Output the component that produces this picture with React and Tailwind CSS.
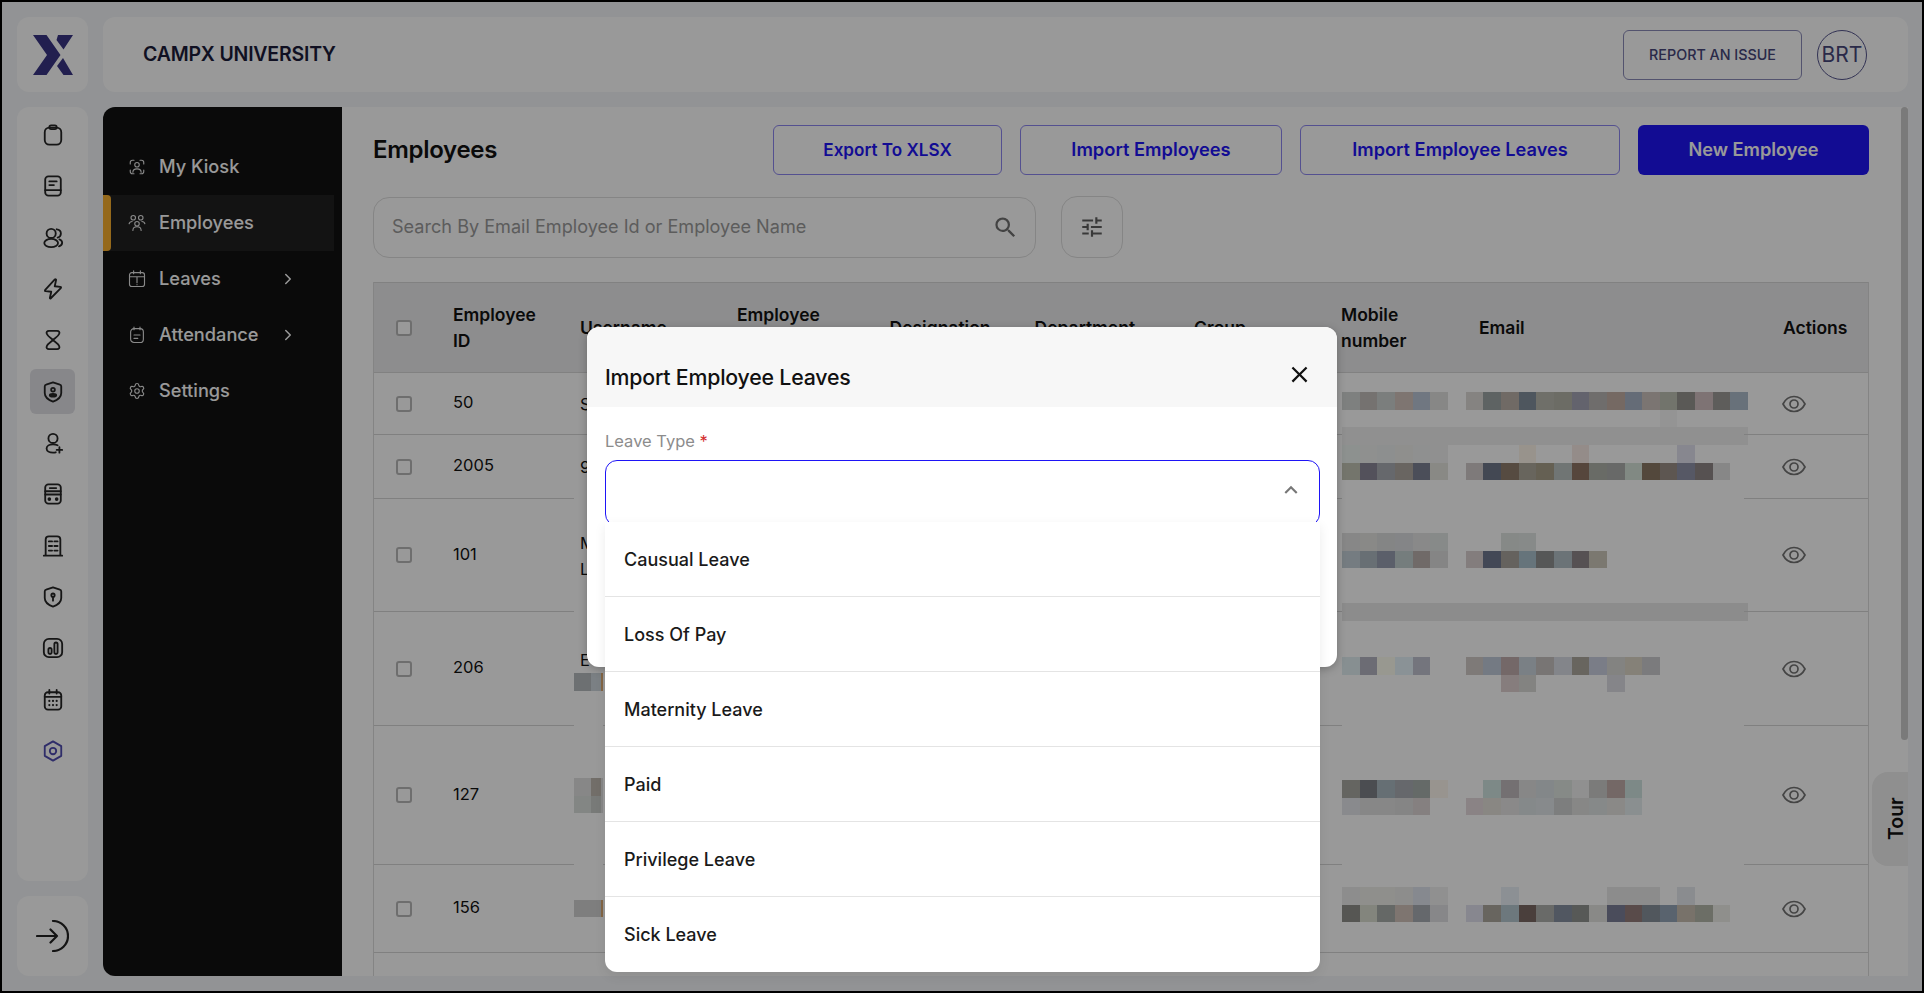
import { ChevronRight, Settings } from "lucide-react";
import { MdClose, MdExpandLess, MdSearch, MdTune } from "react-icons/md";

const undim = (hex) => {
  // the mosaic colours were read off the dimmed page, so undo the 40% overlay
  const n = parseInt(hex, 16);
  const ch = (v) => Math.min(255, Math.round((v * 0.95) / 0.6));
  return `rgb(${ch(n >> 16)}, ${ch((n >> 8) & 255)}, ${ch(n & 255)})`;
};

function Line({ children, size = 24, stroke = 2, className = "" }) {
  return (
    <svg width={size} height={size} viewBox="0 0 24 24" fill="none" stroke="currentColor" strokeWidth={stroke} strokeLinecap="round" strokeLinejoin="round" className={className}>
      {children}
    </svg>
  );
}

const railIcons = [
  <><rect x="3" y="4" width="18" height="18.5" rx="5" /><rect x="8" y="1.5" width="8" height="4" rx="2" /></>,
  <><rect x="3.5" y="1.5" width="17" height="21" rx="3.5" /><path d="M3.5 16.5h17M8 7h8M8 11h5" /></>,
  <><circle cx="10" cy="7" r="5" /><ellipse cx="10" cy="17.5" rx="7.5" ry="4.5" /><path d="M16 2.5c3 .3 4.6 2.2 4.6 4.5s-1.600 4-3.600 4.500M19 13.500c2 .8 3 2.200 3 3.800s-1.500 3.200-3.500 3.800" /></>,
  <path d="M14 1.500 3.500 13c-.6.700-.3 1.300.6 1.400l6 .6-1.500 6.600c-.1.700.5 1 1 .5L20.500 11c.6-.7.300-1.300-.6-1.400l-6-.6 1.500-7c.1-.6-.9-.9-1.400-.5Z" />,
  <path d="M7.500 2h9c2 0 3 1.500 2.300 3.200C17.500 8.500 14 10 12 12c2 2 5.500 3.500 6.800 6.800.7 1.700-.3 3.200-2.300 3.200h-9c-2 0-3-1.500-2.300-3.200C6.500 15.500 10 14 12 12 10 10 6.500 8.500 5.200 5.200 4.500 3.500 5.500 2 7.500 2Z" />,
  <><path d="M12 1.500 19.500 4c1 .3 1.500 1 1.500 2v7c0 4.500-5 8-9 9.500C8 21 3 17.500 3 13V6c0-1 .5-1.700 1.500-2Z" /><circle cx="12" cy="9.500" r="2" /><ellipse cx="12" cy="15.500" rx="3.500" ry="1.500" fill="currentColor" /></>,
  <><circle cx="12" cy="7" r="5" /><path d="M17 14.500c-1.400-.7-3-1-5-1-4 0-7 2-7 4.500s3 4.500 7 4.500c1 0 2-.1 3-.4M19 16.500v6M16 19.500h6" /></>,
  <><rect x="3.500" y="1.500" width="17" height="21" rx="3.500" /><path d="M3.500 12.500h17M3.500 9h17M8.500 5.500h7" /><circle cx="8" cy="17.500" r="1" fill="currentColor" /><circle cx="16" cy="17.500" r="1" fill="currentColor" /></>,
  <><path d="M4 22V5c0-2 1.500-3.500 3.500-3.500h9c2 0 3.500 1.500 3.500 3.500v17M2 22.500h20M7.500 7h3.500M13.500 7h3.500M7.500 12h3.500M13.500 12h3.500M7.500 17h3.500M13.500 17h3.500" /></>,
  <><path d="M12 1.500 19.500 4c1 .3 1.500 1 1.500 2v7c0 4.500-5 8-9 9.500C8 21 3 17.500 3 13V6c0-1 .5-1.700 1.500-2Z" /><circle cx="12" cy="10" r="1.800" /><path d="M12 12v4" /></>,
  <><rect x="2" y="2" width="20" height="20" rx="5.500" /><rect x="7" y="12" width="3.500" height="6.500" rx="1.750" /><rect x="13.500" y="6" width="3.500" height="12.500" rx="1.750" /></>,
  <><rect x="3" y="3.500" width="18" height="19" rx="3.500" /><path d="M3 8.500h18M8 1v4M16 1v4" /><path d="M8 13h.01M12 13h.01M16 13h.01M8 17.500h.01M12 17.500h.01M16 17.500h.01" strokeWidth="2.400" /></>,
  <><path d="M12 1.500 21 6.700v10.600L12 22.500 3 17.300V6.700Z" /><circle cx="12" cy="12" r="3.500" /></>,
];

const navItems = [
  {
    label: "My Kiosk",
    icon: <><path d="M3 8V6a3 3 0 0 1 3-3h2M16 3h2a3 3 0 0 1 3 3v2M21 16v2a3 3 0 0 1-3 3h-2M8 21H6a3 3 0 0 1-3-3v-2" /><circle cx="12" cy="9" r="3" /><path d="M6.500 19c0-3 2.500-4.500 5.500-4.500s5.500 1.500 5.500 4.500" /></>,
  },
  {
    label: "Employees",
    active: true,
    icon: <><circle cx="7" cy="5" r="3" /><circle cx="17" cy="5" r="3" /><circle cx="12" cy="13" r="3" /><path d="M1.500 13c.5-2 2-3 4-3M22.500 13c-.5-2-2-3-4-3M6.500 22c0-3 2.500-5 5.500-5s5.500 2 5.500 5" /></>,
  },
  {
    label: "Leaves",
    arrow: true,
    icon: <><rect x="2" y="3.500" width="20" height="18.500" rx="3" /><path d="M2 9h20M7.500 1v4M16.500 1v4M8 9h8M12 9v8M12 19.500v.01" /></>,
  },
  {
    label: "Attendance",
    arrow: true,
    icon: <><rect x="3.500" y="3.500" width="17" height="18.500" rx="4.500" /><path d="M8 1.500v3.500M16 1.500v3.500M8 12h8M8 16.500h5" /></>,
  },
];

// one string per mosaic line, 23 cells wide: mobile column, a gap, then email
const mosaics = [
  ["858786 7b7876 828584 857c77 767d88 8f8f8d . 8c8a88 636968 76706a 525a63 75756f 72726a 686873 757372 7c6f68 6a727d 827c78 787a72 5f5e5b 85797a 636260 6e7780",
    ". . . . . . . . . . . . . . . . . . 9c9c9c . . . .",
    "989898 989898 989898 989898 989898 989898 989898 989898 989898 989898 989898 989898 989898 989898 989898 989898 989898 989898 989898 989898 989898 989898 989898"],
  ["959997 969896 959796 969695 979898 989898 . . . . a09b94 . . 9c9490 . . . . . 8e8e96 . . .",
    "7a7b72 575560 6c6d72 6f6a66 4f535e 90908c . 858080 474c58 5a4f45 6d6a62 6b6558 767b7a 5a4a40 6f716c 6d6f6d 88908a 584c40 625a55 5b5d6b 5a5555 8e8e8e ."],
  ["8f8f8f 90908e 8b8c8c 8b8c8f 909090 8f9190 . . . 8d908e 8e9190 . . . . . . . . . . . .",
    "7b8388 6e757a 606470 7c8484 76706e 8c8c8c . 8a8484 474c5a 6a6763 6c7a82 5a5c5c 71797d 5a5558 827e76 . . . . . . . .",
    ".",
    ".",
    "949494 949494 949494 949494 949494 949494 949494 949494 949494 949494 949494 949494 949494 949494 949494 949494 949494 949494 949494 949494 949494 949494 949494"],
  ["8f9799 72727a a0a098 929a9e 7a7c84 . . 85807e 7a808a 7a6e6e 80878c 7f7b7a 8a8c92 6e6a64 80848e 8a8a88 8c887e 828284 . . . . .",
    ". . . . . . . . . 8d8484 8a8a88 . . . . 8c8c90 . . . . . . ."],
  ["6a6a66 4f5155 6c757a 6c6e72 6b706e a09c96 . . 84908f 7a7678 8e8e8e 8a8e90 8d918f 989898 828280 7a6e6c 84908f . . . . . .",
    "909295 8f8f8f 8e8f8e 8c8c8c 8c8787 . . 918a8c 908e8a 929090 8c9092 8f9294 848585 8f8f8d 8d9090 91908e 929698 . . . . . ."],
  ["959595 969694 969694 959593 8d9096 989898 . . . 93989c . . . . . 939393 939393 939393 . 919396 . . .",
    "5a5a58 8a8c84 6a6e6c 857c76 6a6e72 8f8e90 . 8e8e96 6e6a64 737f84 4e4240 6f706e 555c66 5c5e5c 90908f 4e5060 5e4f4e 555c62 5e6874 7e7870 72746c 969693 ."],
];

const rows = [
  { id: "50", name: ["S"], h: "h-[62px]", mt: "mt-[19px]", line: true },
  { id: "2005", name: ["9"], h: "h-[64px]", mt: "mt-[10px]" },
  { id: "101", name: ["M", "L"], h: "h-[113px]", mt: "mt-[34px]" },
  { id: "206", name: ["E"], h: "h-[114px]", mt: "mt-[45px]", nameBlur: ["737678 82878b 8a6a48"] },
  { id: "127", name: [], h: "h-[139px]", mt: "mt-[54px]", nameBlur: ["8f8f8f 78746f 8e8e8e", "8a8d8b 7e807e 8e8e8e"] },
  { id: "156", name: [], h: "h-[88px]", mt: "mt-[22px]", line: true, nameBlur: ["858585 858585 8a6a48"] },
];

const leaveTypes = ["Causual Leave", "Loss Of Pay", "Maternity Leave", "Paid", "Privilege Leave", "Sick Leave"];

function Mosaic({ lines }) {
  return (
    <div>
      {lines.map((line, i) => (
        <div key={i} className="flex h-[17.6px]">
          {line.split(" ").map((c, j) => (
            <div key={j} className="h-full w-[17.67px] shrink-0" style={c === "." ? undefined : { backgroundColor: undim(c) }} />
          ))}
        </div>
      ))}
    </div>
  );
}

function Checkbox() {
  return <div className="h-4 w-4 shrink-0 rounded-[3px] border-2 border-[#b8b8b8] bg-white" />;
}

function EyeIcon() {
  return (
    <svg width="24" height="18" viewBox="0 0 24 18" fill="none" stroke="#747474" strokeWidth="1.700">
      <path d="M1 9C3.500 4 7.500 1.500 12 1.500S20.500 4 23 9c-2.500 5-6.500 7.500-11 7.500S3.500 14 1 9Z" />
      <circle cx="12" cy="9" r="4" />
    </svg>
  );
}

function OutlineButton({ className, children }) {
  return (
    <button className={`flex h-[50px] items-center justify-center rounded-md border border-[#8d86f0] font-semibold text-[#1e14f6] ${className}`}>
      {children}
    </button>
  );
}

export default function App() {
  return (
    <div className="relative h-screen w-screen overflow-hidden border-2 border-black bg-[#f3f5f8] font-['Inter',sans-serif] text-[#111]">
      <div className="flex h-full flex-col gap-[15px] pb-[15px] pl-[15px] pr-[14px] pt-[15px]">
        {/* top bar */}
        <div className="flex h-[75px] gap-[15px]">
          <div className="flex w-[71px] items-center justify-center rounded-xl bg-white">
            <svg width="40" height="40" viewBox="0 0 40 40" fill="#393584">
              <path d="M0 0h13.500l14 20-14 20H0l14-20Z" />
              <path d="M25 0h15l-9.500 14.500-7-9.500ZM24 31l6-8 10 17H30.500Z" />
            </svg>
          </div>
          <div className="flex flex-1 items-center justify-between rounded-xl bg-white pl-[40px] pr-[41px]">
            <span className="text-[19.5px] font-semibold tracking-[-0.2px] text-[#1c1c3a]">CAMPX UNIVERSITY</span>
            <div className="flex items-center gap-[15px]">
              <button className="flex h-[50px] w-[179px] items-center justify-center rounded-md border border-[#8a8ab8] text-[14.300px] font-medium text-[#46467a]">
                REPORT AN ISSUE
              </button>
              <div className="flex h-[50px] w-[50px] items-center justify-center rounded-full border border-[#54548c] text-[21px] text-[#46467a]">
                BRT
              </div>
            </div>
          </div>
        </div>

        <div className="flex flex-1 gap-[15px] overflow-hidden">
          {/* icon rail */}
          <div className="flex w-[71px] flex-col gap-[15px]">
            <div className="flex flex-1 flex-col items-center gap-[6.33px] rounded-xl bg-white pt-[5.500px]">
              {railIcons.map((icon, i) => (
                <div key={i} className={`flex h-[45px] w-[45px] items-center justify-center rounded-md ${i === 5 ? "bg-[#e1e1e7]" : ""} ${i === 12 ? "text-[#4f4bb0]" : "text-[#262626]"}`}>
                  <Line size={22} stroke={2}>{icon}</Line>
                </div>
              ))}
            </div>
            <div className="flex h-[80px] items-center justify-center rounded-xl bg-white">
              <svg width="33" height="32" viewBox="0 0 33 32" fill="none" stroke="#222" strokeWidth="2.200" strokeLinecap="round" strokeLinejoin="round">
                <path d="M17 1c8 0 15 6.500 15 15s-7 15-15 15M1 16h20M14.500 9.500 21 16l-6.500 6.500" />
              </svg>
            </div>
          </div>

          <div className="flex flex-1 overflow-hidden">
            {/* module menu */}
            <aside className="w-[239px] shrink-0 rounded-l-xl bg-[#121212] pt-[32px] text-white">
              {navItems.map((item) => (
                <div key={item.label} className={`relative flex h-[56px] w-[231px] items-center pl-[25px] ${item.active ? "bg-[#202020]" : ""}`}>
                  {item.active && <div className="absolute left-0 top-0 h-full w-2 rounded-r-sm bg-[#f9af2e]" />}
                  <Line size={18} stroke={1.500} className="text-[#e5e5e5]">{item.icon}</Line>
                  <span className="ml-[13px] text-[18.200px] font-medium">{item.label}</span>
                  {item.arrow && <ChevronRight size={18} className="absolute left-[176px] text-white" />}
                </div>
              ))}
              <div className="flex h-[56px] w-[231px] items-center pl-[25px]">
                <Settings size={18} strokeWidth={1.500} className="text-[#e5e5e5]" />
                <span className="ml-[13px] text-[18.200px] font-medium">Settings</span>
              </div>
            </aside>

            {/* employees */}
            <main className="relative flex flex-1 flex-col overflow-hidden bg-white pl-[31px] pr-[39px] pt-[18px]">
              <div className="flex items-center justify-between">
                <h1 className="text-[24px] font-semibold tracking-[-0.3px]">Employees</h1>
                <div className="flex gap-[18px]">
                  <OutlineButton className="w-[229px] text-[17.100px]">Export To XLSX</OutlineButton>
                  <OutlineButton className="w-[262px] text-[18.300px]">Import Employees</OutlineButton>
                  <OutlineButton className="w-[320px] text-[18.200px]">Import Employee Leaves</OutlineButton>
                  <button className="h-[50px] w-[231px] rounded-md bg-[#1e14f6] text-[18.200px] font-semibold text-white">New Employee</button>
                </div>
              </div>

              <div className="mt-[21px] flex items-center gap-[25px]">
                <div className="flex h-[61px] w-[663px] items-center justify-between rounded-2xl border border-[#dedede] pl-[18px] pr-[16px]">
                  <span className="text-[18.100px] text-[#9a9a9a]">Search By Email Employee Id or Employee Name</span>
                  <MdSearch size={27} className="text-[#707070]" />
                </div>
                <div className="flex h-[62px] w-[62px] items-center justify-center rounded-2xl border border-[#dedede]">
                  <MdTune size={26} className="text-[#606060]" />
                </div>
              </div>

              <div className="mt-[24px] flex flex-1 flex-col border-x border-[#dcdcdc]">
                <div className="grid h-[91px] shrink-0 grid-cols-[79px_127px_157px_152.500px_145px_159.500px_147px_138px_304px_1fr] items-center border-y border-[#d8d8d8] bg-[#ececed] text-[17.500px] font-semibold leading-[26px]">
                  <div className="pl-[22px]"><Checkbox /></div>
                  <div className="max-w-[100px]">Employee ID</div>
                  <div>Username</div>
                  <div className="max-w-[100px]">Employee Name</div>
                  <div>Designation</div>
                  <div>Department</div>
                  <div>Group</div>
                  <div className="max-w-[90px]">Mobile number</div>
                  <div>Email</div>
                  <div>Actions</div>
                </div>

                {rows.map((row, i) => (
                  <div key={row.id} className={`flex shrink-0 text-[16.500px] ${row.h}`}>
                    <div className="flex w-[200px] items-center border-b border-[#d6d6d6] pl-[22px]">
                      <Checkbox />
                      <span className="ml-[41px] -translate-y-px">{row.id}</span>
                    </div>
                    <div className={`flex w-[29px] flex-col justify-center whitespace-nowrap pl-[6px] leading-[26px] ${row.line ? "border-b border-[#d6d6d6]" : ""}`}>
                      {row.name.map((part) => <span key={part}>{part}</span>)}
                      {row.nameBlur && (
                        <div className="-ml-[6px]">
                          {row.nameBlur.map((line) => {
                            const [a, b, c] = line.split(" ");
                            return (
                              <div key={line} className="flex h-[17.6px]">
                                <div className="w-[18px]" style={{ backgroundColor: undim(a) }} />
                                <div className="w-[11px]" style={{ backgroundColor: undim(b) }} />
                                <div className="w-[2px]" style={{ backgroundColor: undim(c) }} />
                              </div>
                            );
                          })}
                        </div>
                      )}
                    </div>
                    <div className="w-[739px] border-b border-[#d6d6d6]" />
                    <div className={`w-[402px] ${row.line ? "border-b border-[#d6d6d6]" : ""}`}>
                      <div className={row.mt}>
                        <Mosaic lines={mosaics[i]} />
                      </div>
                    </div>
                    <div className="flex flex-1 items-center border-b border-[#d6d6d6] pl-[38px]">
                      <EyeIcon />
                    </div>
                  </div>
                ))}
              </div>

              {/* scrollbar and tour tab */}
              <div className="absolute right-0 top-0 h-[633px] w-[7px] rounded-full bg-[#cbcbcb]" />
              <div className="absolute right-0 top-[665px] flex h-[94px] w-[36px] items-center justify-center rounded-l-2xl bg-[#eeeeee] pl-[12px]">
                <span className="-rotate-90 text-[19.500px] font-semibold">Tour</span>
              </div>
            </main>
          </div>
        </div>
      </div>

      {/* dim layer */}
      <div className="absolute inset-0 bg-black/40" />

      {/* import dialog */}
      <div className="absolute left-[585px] top-[325px] w-[750px] rounded-xl bg-white shadow-[0_2px_8px_rgba(0,0,0,0.25)]">
        <div className="flex h-[80px] items-center justify-between rounded-t-xl bg-[#f7f7f7] pl-[18px] pr-[24px] pt-[22px]">
          <h2 className="text-[21.300px] font-medium tracking-[-0.2px] text-[#111]">Import Employee Leaves</h2>
          <MdClose size={27} className="-mt-[8px] text-[#111]" />
        </div>
        <div className="h-[260px] pl-[18px] pr-[17px] pt-[22px]">
          <div className="text-[16.500px] leading-[24px] text-[#8c8c8c]">
            Leave Type <span className="text-[#d32f2f]">*</span>
          </div>
          <div className="relative mt-[7px] h-[66px] rounded-xl border border-[#1e14f6]">
            <MdExpandLess size={26} className="absolute right-[15px] top-[16px] text-[#777]" />
            <div className="absolute -left-px -right-px top-[61px] rounded-b-xl bg-white shadow-[0_4px_12px_rgba(0,0,0,0.08)]">
              {leaveTypes.map((type, i) => (
                <div key={type} className={`flex h-[75px] items-center pl-[19px] text-[18px] font-medium text-[#1a1a1a] ${i < leaveTypes.length - 1 ? "border-b border-[#e4e4e4]" : ""}`}>
                  {type}
                </div>
              ))}
            </div>
          </div>
        </div>
      </div>
    </div>
  );
}
